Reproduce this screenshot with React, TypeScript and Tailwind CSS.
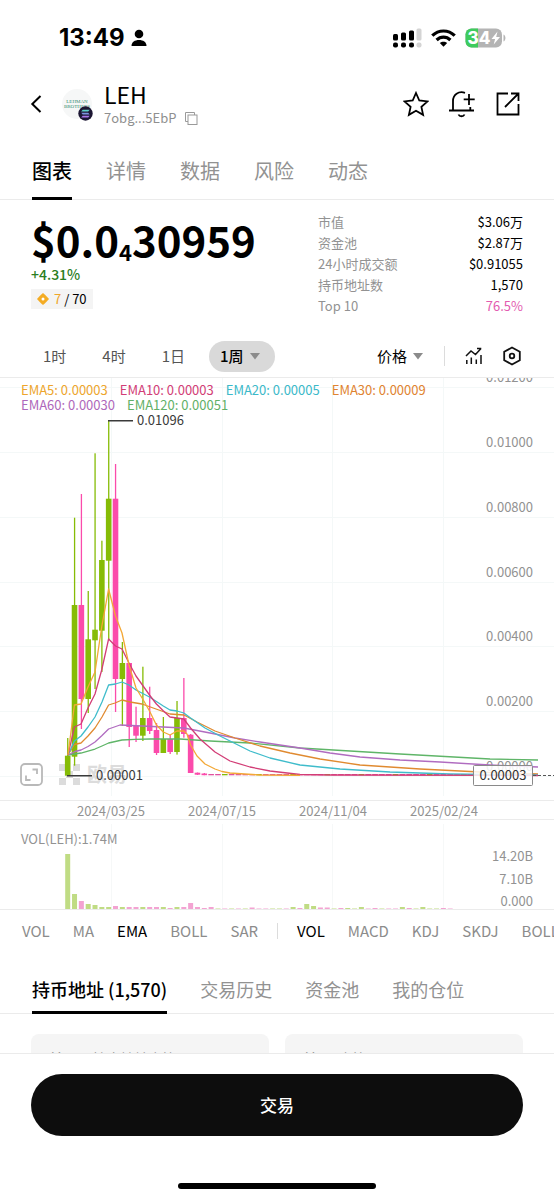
import { useState } from "react";
import clsx from "clsx";

const CHART_TOP = 378;
const STEP = 6.83;
const FIRST_X = 67.7;

const UP = "#86bc06";
const DOWN = "#fb4bab";

const mainTabs = ["图表", "详情", "数据", "风险", "动态"];
const intervals = ["1时", "4时", "1日"];
const overlays = ["VOL", "MA", "EMA", "BOLL", "SAR"];
const oscillators = ["VOL", "MACD", "KDJ", "SKDJ", "BOLL"];
const detailTabs = ["持币地址 (1,570)", "交易历史", "资金池", "我的仓位"];

const stats = [
  { label: "市值", value: "$3.06万" },
  { label: "资金池", value: "$2.87万" },
  { label: "24小时成交额", value: "$0.91055" },
  { label: "持币地址数", value: "1,570" },
  { label: "Top 10", value: "76.5%", pink: true },
];

const emaLegend = [
  { text: "EMA5: 0.00003", color: "text-[#eda52c]" },
  { text: "EMA10: 0.00003", color: "text-[#d23d76]" },
  { text: "EMA20: 0.00005", color: "text-[#3bb9c9]" },
  { text: "EMA30: 0.00009", color: "text-[#e08330]" },
  { text: "EMA60: 0.00030", color: "text-[#ae68bb]" },
  { text: "EMA120: 0.00051", color: "text-[#62b067]" },
];

// high, body top, body bottom, low, rising
const candles: [number, number, number, number, boolean][] = [
  [738, 755.7, 775.7, 775.7, true],
  [517.7, 605, 756.7, 765.7, true],
  [494, 605, 699, 729, false],
  [591, 639.3, 699, 713, true],
  [453.3, 629.7, 640.3, 689, true],
  [540.7, 560, 630.7, 672, true],
  [420.7, 498.7, 560.7, 640, true],
  [464, 498.7, 679, 712, false],
  [642, 663, 679, 726, true],
  [663, 663, 727, 747, false],
  [706.7, 726, 735.7, 742, false],
  [666.7, 718, 735.7, 741, true],
  [686.7, 718, 731, 734, false],
  [723, 730, 753, 755, false],
  [717, 739, 753, 753, true],
  [735, 739, 752, 754, false],
  [701, 718, 752, 754.6, true],
  [678, 718, 734, 737.7, false],
  [734, 734.7, 773, 773, false],
  [772.5, 772.7, 774.7, 775, false],
  [773, 773.5, 775.2, 775.2, false],
];

const emaLines = [
  {
    color: "#5fb568",
    points:
      "68,755 81,753 88,751 95,749 102,746 108.6,743 122,740 135,739.3 150,739 180,739 195,740 210,741 250,743 300,748 400,754 490,759 538,760",
  },
  {
    color: "#b06cc0",
    points:
      "68,755 75,751.5 81,750 88,746.5 95,742 102,735.5 108.6,729 120,725 142,726 163,727 184,728 210,733 235,738 260,742 300,748 330,753 360,757 400,760 440,762 490,765 538,767",
  },
  {
    color: "#e08a30",
    points:
      "68,755 74.4,744.5 81,743 88,736 95,728 102,717 108.6,705 115,703 122,700 130,702 142,704 156,709 170,714 184,715 197,722 215,731 235,738 260,746 290,753 320,759 360,765 420,769 480,772 538,774",
  },
  {
    color: "#3fbccb",
    points:
      "68,755 74.4,741 81,736 88,727 95,717 102,702 108.6,685 115.5,684 122,682 129,685 136,690 149.5,697 163.3,706 170,710 177,711 183.8,713 190.6,718 205,728 220,736 240,746 250,751 270,758 300,765 340,769 390,772 450,774 538,775",
  },
  {
    color: "#d23d76",
    points:
      "68,755 74.4,727 81,724 88,708 95,694 101.7,670 108.6,639 115.5,646 122,649 129,663 136,676 149.5,695 156.4,704 163,710.5 170,717 183.8,719 190.6,728 200,739 215,752 230,761 250,767 270,771 300,774.5 330,775 538,775.5",
  },
  {
    color: "#f3a836",
    points:
      "68,755 74.4,705 81,704 88,687 95,672 101.7,627 108.6,589 115.5,616 122,633 129,665 136,688 142.7,699 149.5,711 156.4,725 163.3,732 170,735 177,731 183.8,731 187,734 190.6,745 197,756 205,764 215,769 222,771.5 230,773 260,775 300,775.3",
  },
];

// bar heights, rising when the second entry is true
const volumes: [number, boolean][] = [
  [55, true],
  [15, true],
  [8, false],
  [5, true],
  [4, true],
  [2, true],
  [2, true],
  [3, false],
  [2, true],
  [2, false],
  [2, false],
  [2, true],
  [2, false],
  [2, false],
  [2, true],
  [1, false],
  [2, true],
  [2, false],
  [6, false],
  [2, false],
  [1, false],
  [2, false],
  [0.5, true],
  [0.5, false],
  [0.5, true],
  [0.5, false],
  [0.5, true],
  [1.5, false],
  [0.5, false],
  [0.5, false],
  [0.5, true],
  [0.5, true],
  [0.5, false],
  [2, true],
  [1, false],
  [5, true],
  [3, true],
  [1.5, false],
  [1.5, false],
  [0.5, true],
  [1, false],
  [1, true],
  [0.5, true],
  [2, true],
  [0.5, false],
  [1, false],
  [0.5, true],
  [0.5, false],
  [0.5, false],
  [2, true],
  [1, false],
  [0.5, true],
  [2, true],
  [0.5, true],
  [0.5, true],
  [1, false],
  [0.5, false],
];

const priceTicks = [
  { y: 387, label: "0.01200" },
  { y: 452, label: "0.01000" },
  { y: 517, label: "0.00800" },
  { y: 582, label: "0.00600" },
  { y: 646, label: "0.00400" },
  { y: 711, label: "0.00200" },
  { y: 776, label: "0.00000" },
];

const gridX = [111, 222, 332, 443];

function StatusBar() {
  return (
    <div className="flex h-[75px] items-center justify-between pl-[59px] pr-[48px]">
      <div className="flex items-center gap-[6px]">
        <span className="font-['Inter',sans-serif] text-[24px] font-bold leading-7">
          13:49
        </span>
        <svg width="16" height="18" viewBox="0 0 16 18">
          <circle cx="8" cy="5" r="4.3" />
          <path d="M0.5 17c0-4 3.300-6 7.500-6s7.500 2 7.500 6z" />
        </svg>
      </div>
      <div className="flex items-center gap-[9px]">
        <svg width="29" height="20" viewBox="0 0 29 20">
          <rect x="0" y="6" width="5" height="6.500" rx="1.500" />
          <rect x="8" y="4.500" width="5" height="8" rx="1.500" />
          <rect x="16" y="2.500" width="5" height="10" rx="1.500" />
          <rect x="23.500" y="0.500" width="5" height="12" rx="1.500" fill="#d4d4d4" />
          <rect x="0" y="14.500" width="5" height="5" rx="2" />
          <rect x="8" y="14.500" width="5" height="5" rx="2" />
          <rect x="16" y="14.500" width="5" height="5" rx="2" />
          <rect x="23.500" y="14.500" width="5" height="5" rx="2" fill="#d4d4d4" />
        </svg>
        <svg width="25" height="18" viewBox="0 0 25 18" fill="none" stroke="#000" strokeWidth="3.200">
          <path d="M1.300 6.700C7.500 0.400 17.500 0.400 23.700 6.700" />
          <path d="M5.600 11c4-3.900 9.800-3.900 13.800 0" />
          <path d="M12.500 17.800L8.800 14.100c2.100-1.900 5.300-1.900 7.400 0z" fill="#000" stroke="none" />
        </svg>
        <svg width="41" height="20" viewBox="0 0 41 20">
          <defs>
            <clipPath id="battery">
              <rect x="0.500" y="0.500" width="36.500" height="19" rx="6" />
            </clipPath>
          </defs>
          <g clipPath="url(#battery)">
            <rect width="38" height="20" fill="#b4b4b4" />
            <rect width="13" height="20" fill="#3ecb5d" />
          </g>
          <path d="M38.500 6.500c2.600 1.200 2.600 5.800 0 7z" fill="#b4b4b4" />
          <text x="2.500" y="16" fontFamily="Inter, sans-serif" fontSize="17" fontWeight="800" fill="#fff">
            34
          </text>
          <path d="M32.500 3.500l-6 7.500h3.600l-1.400 5.500 6.300-7.500h-3.800z" fill="#fff" />
        </svg>
      </div>
    </div>
  );
}

function Header() {
  return (
    <header className="flex h-[58px] items-center pl-[30px] pr-[33px]">
      <button type="button" aria-label="返回" className="mr-5">
        <svg width="12" height="18" viewBox="0 0 12 18" fill="none" stroke="#000" strokeWidth="2">
          <path d="M10.500 1L2.300 9l8.200 8" />
        </svg>
      </button>
      <svg width="33" height="34" viewBox="0 0 33 34" className="shrink-0">
        <circle cx="15" cy="17" r="15" fill="#f6f7f7" />
        <text x="15" y="16" textAnchor="middle" fontFamily="Liberation Serif, serif" fontSize="5" fill="#2f8a6c">
          LEHMAN
        </text>
        <text x="15" y="21" textAnchor="middle" fontFamily="Liberation Serif, serif" fontSize="5" fill="#2f8a6c">
          BROTHERS
        </text>
        <circle cx="23.500" cy="26.500" r="7.200" fill="#1c1633" />
        <path d="M20.700 22.700h7l-1.500 1.700h-7z" fill="#5ed0c8" />
        <path d="M19.200 25.700h7l1.500 1.700h-7z" fill="#7c93e0" />
        <path d="M20.700 28.700h7l-1.500 1.700h-7z" fill="#a877e8" />
      </svg>
      <div className="ml-[9px] flex flex-col">
        <h1 className="text-[23px] leading-7 text-black">LEH</h1>
        <div className="flex items-center gap-[9px] text-[13px] leading-5 text-[#8f8f8f]">
          7obg...5EbP
          <button type="button" aria-label="复制">
            <svg width="13" height="13" viewBox="0 0 13 13" fill="none" stroke="#9a9a9a">
              <path d="M3 9.500H0.500v-9h9V3" />
              <rect x="3" y="3" width="9" height="9.500" />
            </svg>
          </button>
        </div>
      </div>
      <div className="ml-auto flex items-center gap-[19px]">
        <button type="button" aria-label="收藏">
          <svg width="26" height="26" viewBox="0 0 26 26" fill="none" stroke="#000" strokeWidth="1.800">
            <path d="M13 2l3.300 7.500 8.200 0.900-6.100 5.500 1.700 8L13 19.800l-7.100 4.100 1.700-8L1.500 10.400l8.200-0.900z" />
          </svg>
        </button>
        <button type="button" aria-label="提醒">
          <svg width="28" height="28" viewBox="0 0 28 28" fill="none" stroke="#000" strokeWidth="1.800">
            <path d="M17 2.800C10.500 0.600 5 4.800 5 11v9.500M1 20.500h25M22.300 17v3.500M21 4v11M15.700 9.300h11" />
            <path d="M10.500 24.500c1 2.300 5 2.300 6 0" />
          </svg>
        </button>
        <button type="button" aria-label="分享">
          <svg width="26" height="26" viewBox="0 0 26 26" fill="none" stroke="#000" strokeWidth="1.800">
            <path d="M13 2.500H2.500v21h21V13M16 2.500h7.500V10M23.500 2.500L10 16" />
          </svg>
        </button>
      </div>
    </header>
  );
}

function Caret() {
  return (
    <svg width="10" height="7" viewBox="0 0 10 7" className="pointer-events-none -ml-[14px]">
      <path d="M0 0h10L5 6.500z" fill="#8b8b8b" />
    </svg>
  );
}

function PriceChart() {
  const y = (v: number) => v - CHART_TOP;

  return (
    <div className="relative border-t border-[#ebebeb]">
      <svg viewBox="0 0 554 422" className="block h-auto w-full font-['Noto_Sans_CJK_SC',sans-serif]">
        <g stroke="#f4f8f8">
          {priceTicks.map((t) => (
            <line key={t.label} x1="0" x2="554" y1={y(t.y) + 0.5} y2={y(t.y) + 0.5} />
          ))}
          {gridX.map((x) => (
            <line key={x} x1={x + 0.5} x2={x + 0.5} y1="0" y2="418" />
          ))}
        </g>

        {/* watermark */}
        <g fill="#dcdcdc">
          <path d="M59 386h7v7h-7zM73 386h7v7h-7zM66 393h7v7h-7zM59 400h7v7h-7zM73 400h7v7h-7z" />
          <text x="87" y="404" fontSize="20" fontWeight="700">
            欧易
          </text>
        </g>

        {/* y axis */}
        <g fill="#929292" fontSize="13" textAnchor="end">
          {priceTicks.map((t) => (
            <text key={t.label} x="533" y={y(t.y) - 5}>
              {t.label}
            </text>
          ))}
        </g>

        {candles.map(([high, top, bottom, low, rising], i) => {
          const x = FIRST_X + i * STEP;
          return (
            <g key={i} fill={rising ? UP : DOWN}>
              <rect x={x - 0.6} y={y(high)} width="1.3" height={low - high} />
              <rect x={x - 2.8} y={y(top)} width="5.6" height={bottom - top} />
            </g>
          );
        })}
        {Array.from({ length: 48 }, (_, i) => (
          <rect
            key={i}
            x={FIRST_X + (i + 21) * STEP - 2.8}
            y="396"
            width="5.6"
            height="1.3"
            fill={i % 5 === 2 ? UP : "#e0509f"}
          />
        ))}

        <g fill="none" strokeWidth="1.3" strokeLinejoin="round" transform={`translate(0 ${-CHART_TOP})`}>
          {emaLines.map((line) => (
            <polyline key={line.color} points={line.points} stroke={line.color} />
          ))}
        </g>

        {/* high and low marks */}
        <g fill="#3a3a3a" stroke="none" fontSize="13">
          <path d="M108 42h25v1.500h-25zM67 397h25v1.500h-25z" />
          <text x="137" y="47">0.01096</text>
          <text x="96" y="402">0.00001</text>
        </g>

        {/* last price */}
        <line x1="533" x2="554" y1="397.500" y2="397.500" stroke="#555" strokeDasharray="3 2" />
        <rect x="473.500" y="387.500" width="59" height="20" rx="1" fill="#fff" fillOpacity="0.85" stroke="#8a8a8a" />
        <text x="503" y="402" fontSize="13" textAnchor="middle" fill="#333">
          0.00003
        </text>
      </svg>

      <div className="absolute left-[21px] right-20 top-1 flex flex-wrap gap-x-3 text-[13px] leading-[15px]">
        {emaLegend.map((item) => (
          <span key={item.text} className={item.color}>
            {item.text}
          </span>
        ))}
      </div>

      <button type="button" aria-label="全屏" className="absolute bottom-[14px] left-5">
        <svg width="23" height="23" viewBox="0 0 23 23" fill="none" stroke="#b9b9b9" strokeWidth="1.800">
          <rect x="1" y="1" width="21" height="21" rx="4" fill="#fff" />
          <path d="M12.500 6.500h4.500v4.500M6 12.500V17h4.500" />
        </svg>
      </button>
    </div>
  );
}

function VolumeChart() {
  return (
    <div className="relative border-b border-[#ebebeb]">
      <svg viewBox="0 0 554 89" className="block h-auto w-full font-['Noto_Sans_CJK_SC',sans-serif]">
        {gridX.map((x) => (
          <line key={x} x1={x + 0.5} x2={x + 0.5} y1="4" y2="89" stroke="#f6f8f8" />
        ))}
        {volumes.map(([height, rising], i) => (
          <rect
            key={i}
            x={FIRST_X + i * STEP - 2.5}
            y={89 - height}
            width="5"
            height={height}
            fill={rising ? "#c0dc84" : "#f3a3d2"}
          />
        ))}
        <g fill="#929292" fontSize="13">
          <text x="21" y="24">VOL(LEH):1.74M</text>
          <g textAnchor="end">
            <text x="533" y="41">14.20B</text>
            <text x="533" y="64">7.10B</text>
            <text x="533" y="86">0.000</text>
          </g>
        </g>
      </svg>
    </div>
  );
}

export default function App() {
  const [tab, setTab] = useState("图表");
  const [detail, setDetail] = useState(detailTabs[0]);
  const [overlay, setOverlay] = useState("EMA");
  const [oscillator, setOscillator] = useState("VOL");

  return (
    <div className="flex h-screen flex-col bg-white font-['Noto_Sans_CJK_SC',sans-serif] text-black">
      <main className="min-h-0 flex-1 overflow-hidden">
        <StatusBar />
        <Header />

        {/* page tabs */}
        <nav className="mt-[15px] flex h-[52px] gap-[34px] border-b border-[#ebebeb] px-8">
          {mainTabs.map((name) => (
            <button
              key={name}
              type="button"
              onClick={() => setTab(name)}
              className={clsx(
                "-mb-px border-b-3 pb-1 text-[20px] leading-6",
                tab === name
                  ? "border-black font-medium text-black"
                  : "border-transparent text-[#929292]"
              )}
            >
              {name}
            </button>
          ))}
        </nav>

        {/* price and stats */}
        <section className="flex h-[117px] justify-between px-[31px] pt-3">
          <div>
            <div className="mt-1 h-[46px] text-[42px] font-bold leading-[46px]">
              $0.0<span className="relative top-1 text-[22px] leading-none">4</span>30959
            </div>
            <div className="text-[14px] font-medium leading-6 text-[#2a7d22]">+4.31%</div>
            <div className="mt-[3px] flex h-5 w-fit items-center gap-[5px] bg-[#f4f4f4] px-[6px] text-[13px]">
              <svg width="12" height="12" viewBox="0 0 12 12">
                <path
                  d="M6 0l2 1.800 2.200 2.200L12 6l-1.800 2L8 10.200 6 12l-2-1.800L1.800 8 0 6l1.800-2L4 1.800z"
                  fill="#f4ac24"
                />
                <circle cx="6" cy="6" r="1.500" fill="#fff" />
              </svg>
              <span>
                <span className="text-[#efa628]">7</span> / 70
              </span>
            </div>
          </div>
          <dl className="flex w-[205px] flex-col gap-px text-[13px] leading-5">
            {stats.map((s) => (
              <div key={s.label} className="flex justify-between">
                <dt className="text-[#929292]">{s.label}</dt>
                <dd className={s.pink ? "text-[#e35bb0]" : "text-black"}>{s.value}</dd>
              </div>
            ))}
          </dl>
        </section>

        {/* interval picker */}
        <div className="mb-[5px] mt-[23px] flex h-8 items-center pl-[43px] pr-[33px] text-[15px]">
          <div className="flex gap-9 text-[#555]">
            {intervals.map((name) => (
              <button key={name} type="button">
                {name}
              </button>
            ))}
          </div>
          <div className="ml-6 flex h-[31px] items-center rounded-full bg-[#d9d9d9] pr-[15px]">
            <select
              aria-label="周期"
              className="h-full w-[69px] appearance-none rounded-full pl-[11px] font-medium -mr-[14px] outline-none"
            >
              <option>1周</option>
            </select>
            <Caret />
          </div>
          <div className="ml-auto flex items-center">
            <select aria-label="指标类型" className="w-[50px] appearance-none outline-none">
              <option>价格</option>
            </select>
            <Caret />
            <span className="ml-[21px] mr-5 h-5 w-px bg-[#dcdcdc]" />
            <button type="button" aria-label="指标" className="mr-5">
              <svg width="18" height="18" viewBox="0 0 18 18" fill="none" stroke="#111" strokeWidth="1.500">
                <path d="M1 9l5-5 4.500 3.500L16 1.500M12 1.500h4.300M1.800 13v4M6.300 10.500V17M11.300 12.500V17M16 8v9" />
              </svg>
            </button>
            <button type="button" aria-label="设置">
              <svg width="18" height="20" viewBox="0 0 18 20" fill="none" stroke="#111" strokeWidth="1.800">
                <path d="M9 1.500l7.800 4.300v8.400L9 18.500l-7.800-4.300V5.800z" />
                <circle cx="9" cy="10" r="2.300" />
              </svg>
            </button>
          </div>
        </div>

        <PriceChart />

        {/* date axis */}
        <div className="flex h-5 justify-between border-y border-[#ebebeb] pl-[77px] pr-[76px] text-[13px] leading-[20px] text-[#929292]">
          <span>2024/03/25</span>
          <span>2024/07/15</span>
          <span>2024/11/04</span>
          <span>2025/02/24</span>
        </div>

        <VolumeChart />

        {/* indicators */}
        <div className="flex h-[42px] items-center gap-[23px] overflow-hidden whitespace-nowrap pl-[22px] text-[15px] text-[#8c8c8c]">
          {overlays.map((name) => (
            <button
              key={name}
              type="button"
              onClick={() => setOverlay(name)}
              className={overlay === name ? "text-black" : ""}
            >
              {name}
            </button>
          ))}
          <span className="-mx-1 h-4 w-px shrink-0 bg-[#dcdcdc]" />
          {oscillators.map((name) => (
            <button
              key={name}
              type="button"
              onClick={() => setOscillator(name)}
              className={oscillator === name ? "text-black" : ""}
            >
              {name}
            </button>
          ))}
        </div>

        {/* detail tabs */}
        <div className="mt-4 flex h-[46px] gap-[33px] border-b border-[#ebebeb] px-8">
          {detailTabs.map((name) => (
            <button
              key={name}
              type="button"
              onClick={() => setDetail(name)}
              className={clsx(
                "-mb-px border-b-3 pb-px text-[18px] leading-6",
                detail === name
                  ? "border-black font-medium text-black"
                  : "border-transparent text-[#929292]"
              )}
            >
              {name}
            </button>
          ))}
        </div>

        <div className="mt-5 grid grid-cols-2 gap-4 px-[31px] text-[14px] text-[#8c8c8c]">
          <div className="h-24 rounded-lg bg-[#f5f5f5] px-[18px] pt-[14px] leading-5">
            前 100 持仓地址占比
          </div>
          <div className="h-24 rounded-lg bg-[#f5f5f5] px-[18px] pt-[14px] leading-5">
            前 10 占比
          </div>
        </div>
      </main>

      {/* trade bar */}
      <footer className="border-t border-[#ebebeb] bg-white px-[31px] pb-[11px] pt-5">
        <button type="button" className="h-[62px] w-full rounded-full bg-[#0d0d0d] text-[17px] font-medium text-white">
          交易
        </button>
        <div className="mx-auto mt-[47px] h-[6px] w-[198px] rounded-full bg-black" />
      </footer>
    </div>
  );
}
